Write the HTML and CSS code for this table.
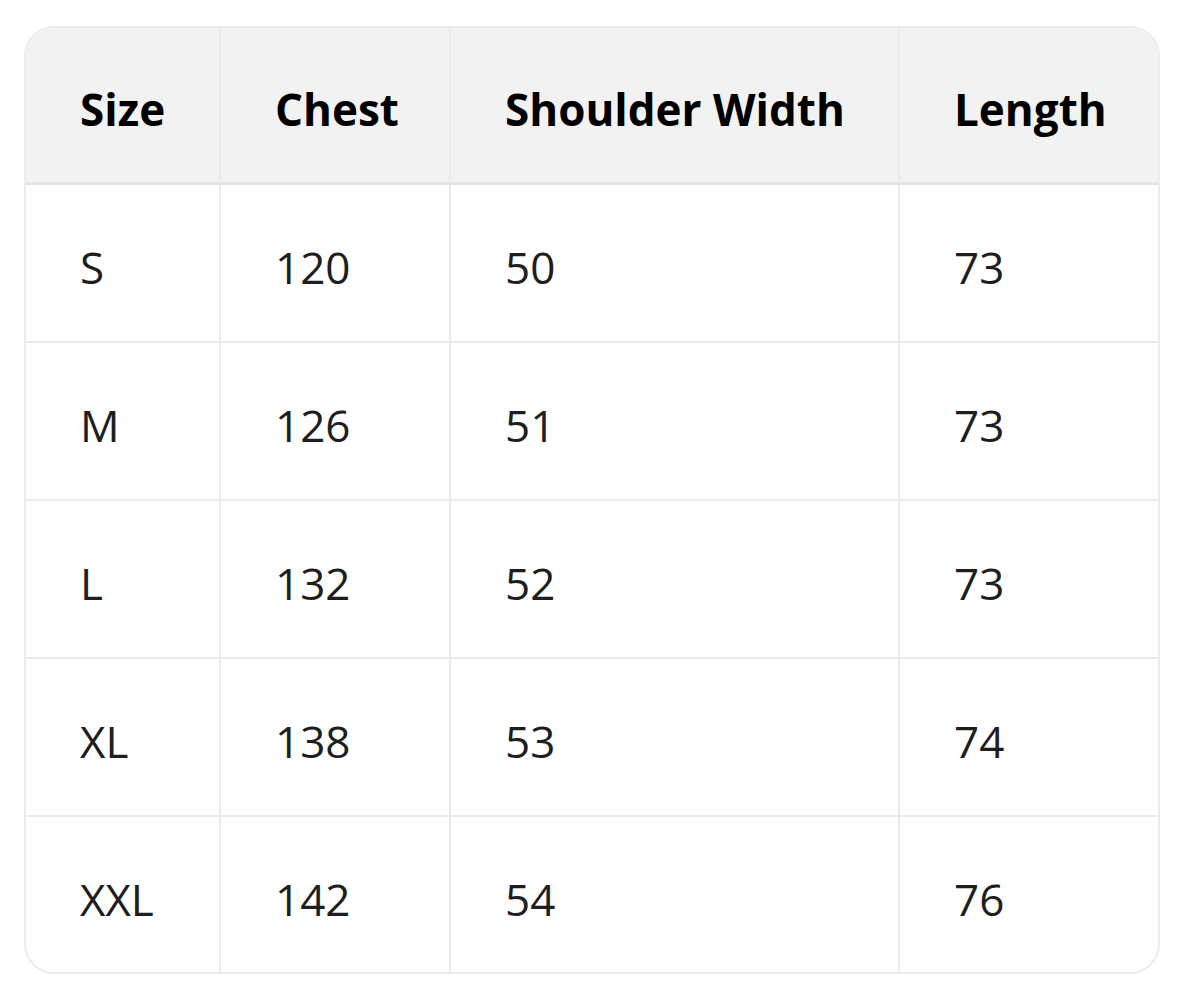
FILE: index.html
```html
<!DOCTYPE html>
<html>
<head>
<meta charset="utf-8">
<link rel="stylesheet" href="styles.css">
</head>
<body>
<div class="wrap">
<table class="size-table">
  <colgroup>
    <col class="c1"><col class="c2"><col class="c3"><col class="c4">
  </colgroup>
  <thead>
    <tr><th>Size</th><th>Chest</th><th>Shoulder Width</th><th>Length</th></tr>
  </thead>
  <tbody>
    <tr><td>S</td><td>120</td><td>50</td><td>73</td></tr>
    <tr><td>M</td><td>126</td><td>51</td><td>73</td></tr>
    <tr><td>L</td><td>132</td><td>52</td><td>73</td></tr>
    <tr><td>XL</td><td>138</td><td>53</td><td>74</td></tr>
    <tr><td>XXL</td><td>142</td><td>54</td><td>76</td></tr>
  </tbody>
</table>
</div>
</body>
</html>
```
FILE: styles.css
```css
html, body {
  margin: 0;
  padding: 0;
  background: #ffffff;
}
.wrap {
  margin: 26px 0 0 24px;
  width: 1136px;
  border: 2px solid #ececec;
  border-radius: 30px;
  overflow: hidden;
  box-sizing: border-box;
}
.size-table {
  width: 100%;
  border-collapse: separate;
  border-spacing: 0;
  table-layout: fixed;
  font-family: "Open Sans", "Noto Sans", sans-serif;
  font-size: 44px;
  color: #1e1e1e;
}
.c1 { width: 195px; }
.c2 { width: 230px; }
.c3 { width: 449px; }
.c4 { width: auto; }
.size-table th,
.size-table td {
  text-align: left;
  vertical-align: middle;
  padding: 8px 0 0 54px;
  border-right: 2px solid #ebebeb;
  border-bottom: 2px solid #ebebeb;
  height: 158px;
  box-sizing: border-box;
}
.size-table th {
  background: #f2f2f2;
  font-weight: 700;
  color: #000;
  height: 157px;
  border-bottom: 3px solid #e4e4e4;
}
.size-table tr > :last-child { border-right: none; }
.size-table tbody tr:last-child td { border-bottom: none; height: 155px; }
```
